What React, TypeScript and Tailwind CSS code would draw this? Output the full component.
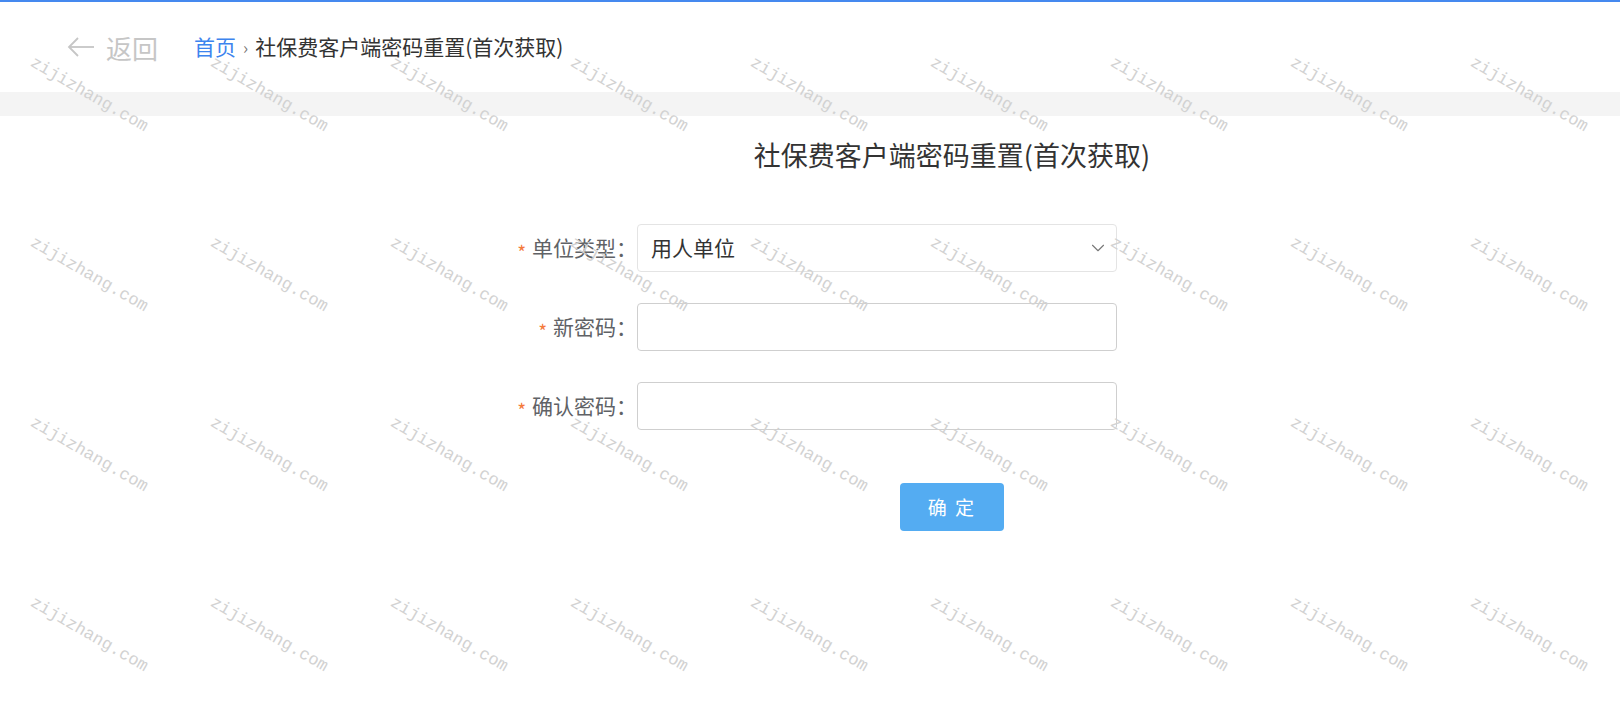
import { ChevronDown } from "lucide-react";

const cjk = "font-['Noto_Sans_CJK_SC','Noto_Sans',sans-serif]";

const rows = [
  { label: "单位类型", kind: "select" },
  { label: "新密码", kind: "input" },
  { label: "确认密码", kind: "input" },
];

const Watermarks = () => (
  <div className="pointer-events-none absolute inset-0 overflow-hidden">
    <div className="grid grid-cols-[repeat(9,180px)] auto-rows-[180px] pl-[36px] pt-[54px]">
      {Array.from({ length: 36 }).map((_, i) => (
        <span
          key={i}
          className="block h-[17px] origin-top-left rotate-[30deg] whitespace-nowrap font-['Liberation_Mono',monospace] text-[17px] leading-[17px] text-[#d2d2d2]"
        >
          zijizhang.com
        </span>
      ))}
    </div>
  </div>
);

export default function App() {
  return (
    <div className={`relative min-h-[708px] overflow-hidden bg-white ${cjk}`}>
      {/* top accent line */}
      <div className="h-[2px] bg-[#4589ef]" />

      {/* Header */}
      <div className="flex h-[90px] items-center">
        <div className="ml-[67px] flex items-center gap-[11px] text-[26px] text-[#c6c6c6]">
          <svg width="28" height="22" viewBox="0 0 28 22" fill="none" stroke="currentColor" strokeWidth="1.8">
            <path d="M27 11H2" />
            <path d="M11 2L2 11l9 9" />
          </svg>
          <span>返回</span>
        </div>
        <div className="ml-[36px] flex items-center text-[21px]">
          <span className="text-[#3d84ee]">首页</span>
          <span className="mx-[7px] text-[17px] text-[#777]">›</span>
          <span className="text-[#333]">社保费客户端密码重置(首次获取)</span>
        </div>
      </div>
      <div className="h-[24px] bg-[#f4f4f4]" />

      {/* Main */}
      <div className="pl-[284px] pt-[20px] text-center text-[27px] leading-[37px] text-[#333]">
        社保费客户端密码重置(首次获取)
      </div>

      <div className="ml-[477px] mt-[51px] flex w-[640px] flex-col gap-[31px]">
        {rows.map((r) => (
          <div key={r.label} className="flex items-center">
            <div className="flex w-[160px] items-center justify-end text-[21px] text-[#606266]">
              <span className="mr-[6px] mt-[6px] text-[19px] leading-none text-[#f47a3c]">*</span>
              <span>{r.label}：</span>
            </div>
            {r.kind === "select" ? (
              <div className="flex h-[48px] w-[480px] items-center justify-between rounded-[4px] border border-[#e4e4e4] pl-[13px] pr-[7px] text-[21px] text-[#333]">
                <span>用人单位</span>
                <ChevronDown className="h-[22px] w-[22px] text-[#777]" strokeWidth={1.2} />
              </div>
            ) : (
              <input
                type="password"
                className="h-[48px] w-[480px] rounded-[4px] border border-[#cfcfcf] px-[13px] text-[21px] outline-none"
              />
            )}
          </div>
        ))}
      </div>

      <div className="mt-[53px] flex justify-center pl-[284px]">
        <button className="h-[48px] w-[104px] rounded-[4px] bg-[#54acf2] text-[19px] tracking-[2px] text-white">
          确 定
        </button>
      </div>

      <Watermarks />
    </div>
  );
}
